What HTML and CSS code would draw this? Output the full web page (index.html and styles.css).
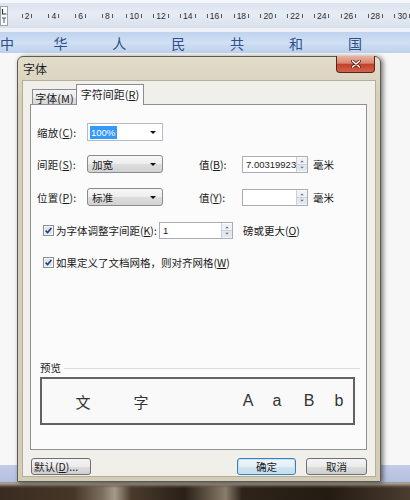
FILE: index.html
```html
<!DOCTYPE html>
<html lang="zh-CN">
<head>
<meta charset="utf-8">
<title>字体</title>
<link rel="stylesheet" href="styles.css">
</head>
<body>
<div class="screen">
  <div class="ruler">
    <svg class="tabstop" width="8" height="20" viewBox="0 0 8 20"><rect x="0.5" y="0.5" width="7" height="19" fill="#fbfcfd" stroke="#9aa6b6"/><path d="M2.5 3v5h4" fill="none" stroke="#333" stroke-width="1.2"/><path d="M2 12h4M4 12v5" fill="none" stroke="#555"/></svg>
    <div class="ticks">
      <span>2</span><span>4</span><span>6</span><span>8</span><span>10</span><span>12</span><span>14</span><span>16</span><span>18</span><span>20</span><span>22</span><span>24</span><span>26</span><span>28</span><span>30</span>
    </div>
  </div>
  <div class="rule-gap"></div>
  <div class="band">
    <span class="first">中</span><span>华</span><span>人</span><span>民</span><span>共</span><span>和</span><span>国</span>
  </div>
  <div class="band-gap"></div>
  <div class="desk">
    <div class="side"><div class="page"></div><div class="task"></div></div>
    <div class="dialog">
      <div class="titlebar">
        <span class="title">字体</span>
        <div class="close"><svg width="10" height="8" viewBox="0 0 10 8"><path d="M1.5 1l7 6M8.5 1l-7 6" stroke="#5a1a10" stroke-width="3" stroke-linecap="round"/><path d="M1.5 1l7 6M8.5 1l-7 6" stroke="#fff" stroke-width="1.6" stroke-linecap="round"/></svg></div>
      </div>
      <div class="client">
        <div class="tabs">
          <div class="tab">字体(<u>M</u>)</div>
          <div class="tab active">字符间距(<u>R</u>)</div>
        </div>
        <div class="panel">
          <div class="row r1">
            <span class="lbl">缩放(<u>C</u>):</span>
            <div class="combo edit"><span class="sel">100%</span><i class="arrow"></i></div>
          </div>
          <div class="row r2">
            <span class="lbl">间距(<u>S</u>):</span>
            <div class="combo list"><span>加宽</span><i class="arrow"></i></div>
            <span class="lbl2">值(<u>B</u>):</span>
            <div class="spin"><span class="val">7.00319923</span><svg class="spinbtn" width="11" height="15" viewBox="0 0 11 15"><rect width="11" height="7" fill="#eef1f5"/><rect y="8" width="11" height="7" fill="#e3e7ee"/><line x1="0" y1="7.5" x2="11" y2="7.5" stroke="#c5cbd4"/><path d="M3.5 5h4L5.5 3z" fill="#5b6d8e"/><path d="M3.5 10h4L5.5 12z" fill="#5b6d8e"/></svg></div>
            <span class="unit">毫米</span>
          </div>
          <div class="row r3">
            <span class="lbl">位置(<u>P</u>):</span>
            <div class="combo list"><span>标准</span><i class="arrow"></i></div>
            <span class="lbl2">值(<u>Y</u>):</span>
            <div class="spin"><span class="val"></span><svg class="spinbtn" width="11" height="15" viewBox="0 0 11 15"><rect width="11" height="7" fill="#eef1f5"/><rect y="8" width="11" height="7" fill="#e3e7ee"/><line x1="0" y1="7.5" x2="11" y2="7.5" stroke="#c5cbd4"/><path d="M3.5 5h4L5.5 3z" fill="#5b6d8e"/><path d="M3.5 10h4L5.5 12z" fill="#5b6d8e"/></svg></div>
            <span class="unit">毫米</span>
          </div>
          <div class="row r4">
            <svg class="chk" width="11" height="11" viewBox="0 0 11 11"><rect x="0.5" y="0.5" width="10" height="10" fill="#f6f6f6" stroke="#8e8f8f"/><rect x="2" y="2" width="7" height="7" fill="#dfe4ec"/><path d="M2.6 5.6l2 2 3.8-4.6" fill="none" stroke="#22417e" stroke-width="1.6"/></svg>
            <span class="chklbl kern">为字体调整字间距(<u>K</u>):</span>
            <div class="spin wide"><span class="val">1</span><svg class="spinbtn" width="11" height="15" viewBox="0 0 11 15"><rect width="11" height="7" fill="#eef1f5"/><rect y="8" width="11" height="7" fill="#e3e7ee"/><line x1="0" y1="7.5" x2="11" y2="7.5" stroke="#c5cbd4"/><path d="M3.5 5h4L5.5 3z" fill="#5b6d8e"/><path d="M3.5 10h4L5.5 12z" fill="#5b6d8e"/></svg></div>
            <span class="unit far">磅或更大(<u>O</u>)</span>
          </div>
          <div class="row r5">
            <svg class="chk" width="11" height="11" viewBox="0 0 11 11"><rect x="0.5" y="0.5" width="10" height="10" fill="#f6f6f6" stroke="#8e8f8f"/><rect x="2" y="2" width="7" height="7" fill="#dfe4ec"/><path d="M2.6 5.6l2 2 3.8-4.6" fill="none" stroke="#22417e" stroke-width="1.6"/></svg>
            <span class="chklbl">如果定义了文档网格，则对齐网格(<u>W</u>)</span>
          </div>
          <div class="group">
            <div class="group-head"><span>预览</span><i class="rule"></i></div>
            <div class="preview">
              <span class="pv cjk p1">文</span>
              <span class="pv cjk p2">字</span>
              <span class="pv lat p3">A</span>
              <span class="pv lat p4">a</span>
              <span class="pv lat p5">B</span>
              <span class="pv lat p6">b</span>
            </div>
          </div>
        </div>
        <div class="buttons">
          <div class="btn def">默认(<u>D</u>)...</div>
          <div class="spacer"></div>
          <div class="btn ok">确定</div>
          <div class="btn cancel">取消</div>
        </div>
      </div>
    </div>
    <div class="side"><div class="page"></div><div class="task"></div></div>
  </div>
  <div class="floor"></div>
</div>
</body>
</html>
```
FILE: styles.css
```css
* { box-sizing: border-box; }
html, body { margin: 0; padding: 0; }
body {
  width: 410px;
  height: 500px;
  overflow: hidden;
  font-family: "Noto Sans CJK SC", "Liberation Sans", sans-serif;
  font-size: 10.5px;
  color: #1a1a1a;
  background: #f6f6f6;
}
.screen { width: 410px; height: 500px; display: flex; flex-direction: column; }

/* ruler */
.ruler {
  height: 28px;
  display: flex;
  align-items: center;
  padding-top: 3px;
  background: linear-gradient(#f4f7fb 0, #f4f7fb 3px, #dbe3ee 3px, #e6ecf4 50%, #d8e0eb 100%);
}
.tabstop { flex: none; display: block; }
.ticks {
  display: flex;
  padding-left: 5.6px;
  font-family: "Liberation Sans", sans-serif;
  font-size: 8.5px;
  color: #2c2c2c;
}
.ticks span {
  width: 26.8px;
  flex: none;
  display: flex;
  align-items: center;
  justify-content: center;
}
.ticks span::before, .ticks span::after {
  content: "";
  width: 1px;
  height: 4px;
  background: #555;
  margin: 0 2px;
}
.rule-gap { height: 4px; background: #eef2f8; }
.band {
  height: 21px;
  display: flex;
  align-items: center;
  background: linear-gradient(#bfd3ed, #d0e0f4 50%, #bed1eb);
  font-size: 14px;
  color: #2e4e8c;
}
.band span { width: 58.9px; flex: none; text-align: center; line-height: 1; }
.band span.first { width: 31px; text-align: left; }
.band-gap { height: 3px; background: #f7f7f7; }

/* desk */
.desk {
  height: 426px;
  display: grid;
  grid-template-columns: 17px 364px 29px;
}
.side { display: flex; flex-direction: column; }
.page { flex: 1; background: #f7f7f7; }
.task { height: 17px; background: linear-gradient(#c2cbe6, #b3bfdf); }

/* dialog */
.dialog {
  position: relative;
  z-index: 1;
  display: flex;
  flex-direction: column;
  border: 1px solid #5f5b52;
  border-radius: 6px 6px 0 0;
  background: linear-gradient(#e2dccb, #d6cfba 40px, #d3ccb6);
  box-shadow: 2px 1px 5px rgba(0, 0, 0, 0.55);
}
.titlebar {
  height: 23px;
  display: flex;
  align-items: center;
  justify-content: space-between;
  padding-left: 5px;
}
.title { font-size: 12px; color: #1e1e1e; }
.close {
  align-self: flex-start;
  margin-top: -1px;
  margin-right: 5px;
  width: 39px;
  height: 17px;
  display: flex;
  align-items: center;
  justify-content: center;
  border: 1px solid #5e2219;
  border-top: none;
  border-radius: 0 0 4px 4px;
  background: linear-gradient(#eab3a3, #d98672 45%, #c2412c 52%, #d2634b 100%);
}
.close svg { display: block; }
.client {
  flex: 1;
  margin: 0 4px 4px 4px;
  border: 1px solid #b4ad99;
  background: #f0efea;
  padding: 3px 8px 0 7px;
  display: flex;
  flex-direction: column;
}
.tabs {
  height: 21px;
  display: flex;
  align-items: flex-end;
  padding-left: 2px;
}
.tab {
  height: 16px;
  width: 45px;
  display: flex;
  align-items: center;
  justify-content: center;
  border: 1px solid #898c95;
  border-bottom: none;
  background: linear-gradient(#f4f4f4, #ececec 50%, #e0e0e0 50%, #d6d6d6);
  font-size: 11px;
  white-space: nowrap;
}
.tab.active {
  position: relative;
  z-index: 1;
  height: 21px;
  width: 68px;
  margin-left: -1px;
  background: #fbfbfb;
  padding-bottom: 2px;
}
.panel {
  margin-top: -1px;
  width: 337px;
  height: 346px;
  border: 1px solid #8e9196;
  background: #fbfbfb;
  padding: 0 6px 0 6px;
}
.row {
  height: 18px;
  display: flex;
  align-items: center;
  white-space: nowrap;
}
.r1 { margin-top: 18px; }
.r2 { margin-top: 14px; }
.r3 { margin-top: 15px; }
.r4 { margin-top: 15px; }
.r5 { margin-top: 14px; }
u { text-decoration: underline; text-underline-offset: 1px; }
.lbl { width: 50px; flex: none; letter-spacing: 0.3px; }
.lbl2 { width: 43px; flex: none; margin-left: 36px; }
.combo {
  width: 76px;
  height: 18px;
  flex: none;
  display: flex;
  align-items: center;
  justify-content: space-between;
  padding: 0 6px 0 2px;
}
.combo.edit { background: #fff; border: 1px solid #b3bac6; }
.combo.list {
  border: 1px solid #8a8a8a;
  border-radius: 3px;
  background: linear-gradient(#f7f7f7, #ededed 50%, #dedede 50%, #d2d2d2);
  padding-left: 4px;
}
.sel {
  background: #3399ff;
  color: #fff;
  line-height: 13px;
  padding: 0 2px 0 1px;
  font-family: "Liberation Sans", sans-serif;
  font-size: 9.5px;
}
.arrow {
  width: 0;
  height: 0;
  border-left: 3px solid transparent;
  border-right: 3px solid transparent;
  border-top: 3px solid #111;
}
.spin {
  width: 66px;
  height: 17px;
  flex: none;
  display: flex;
  border: 1px solid #abadb3;
  background: #fff;
}
.spin.wide { width: 74px; margin-left: 2px; }
.val {
  flex: 1;
  overflow: hidden;
  white-space: nowrap;
  padding-left: 3px;
  font-family: "Liberation Sans", sans-serif;
  font-size: 9.5px;
  line-height: 15px;
  color: #222;
}
.spinbtn { flex: none; display: block; border-left: 1px solid #c9d0da; }
.unit { margin-left: 5px; }
.unit.far { margin-left: 10px; }
.chk { flex: none; display: block; margin-left: 6px; }
.chklbl { margin-left: 2px; }
.chklbl.kern { width: 101px; flex: none; }

/* preview */
.group { margin-top: 91px; margin-left: 3px; width: 320px; }
.group-head { height: 12px; display: flex; align-items: center; line-height: 12px; }
.group-head .rule { flex: 1; height: 1px; background: #dcdcdc; margin-left: 3px; }
.preview {
  margin-top: 3px;
  width: 315px;
  height: 48px;
  border: 2px solid #626262;
  background: #f9f9f9;
  display: flex;
  align-items: center;
  color: #333;
}
.pv { width: 20px; flex: none; text-align: center; }
.cjk { font-size: 15px; }
.lat { font-family: "Liberation Sans", sans-serif; font-size: 16px; }
.p1 { margin-left: 31px; }
.p2 { margin-left: 38px; }
.p3 { margin-left: 87px; }
.p4 { margin-left: 9px; }
.p5 { margin-left: 12px; }
.p6 { margin-left: 10px; }

/* buttons */
.buttons { margin-top: 8px; height: 17px; display: flex; padding-left: 1px; }
.spacer { flex: 1; }
.btn {
  height: 17px;
  display: flex;
  align-items: center;
  justify-content: center;
  border: 1px solid #707070;
  border-radius: 3px;
  background: linear-gradient(#f4f4f4, #ebebeb 50%, #dddddd 50%, #d0d0d0);
  white-space: nowrap;
}
.btn.def { width: 60px; justify-content: flex-start; padding-left: 2px; }
.btn.ok {
  width: 59px;
  border-color: #3c7fb1;
  box-shadow: inset 0 0 0 1px #bfe3f7;
  background: linear-gradient(#eef6fb, #e3eef6 50%, #d3e4f0 50%, #c6dbea);
}
.btn.cancel { width: 61px; margin-left: 10px; }

/* floor */
.floor {
  height: 18px;
  background:
    linear-gradient(to bottom, #a29b90 0, #a29b90 2px, rgba(120, 108, 95, 0.6) 4px, transparent 6px),
    linear-gradient(to right, #3a2c20 0, #463628 18%, #7d6f60 25%, #a89a88 28%, #4a3a2c 32%, #2a2018 45%, #6d5f50 52%, #8a7c6b 55%, #2e241a 59%, #241b13 80%, #4a3d30 100%);
}
```
